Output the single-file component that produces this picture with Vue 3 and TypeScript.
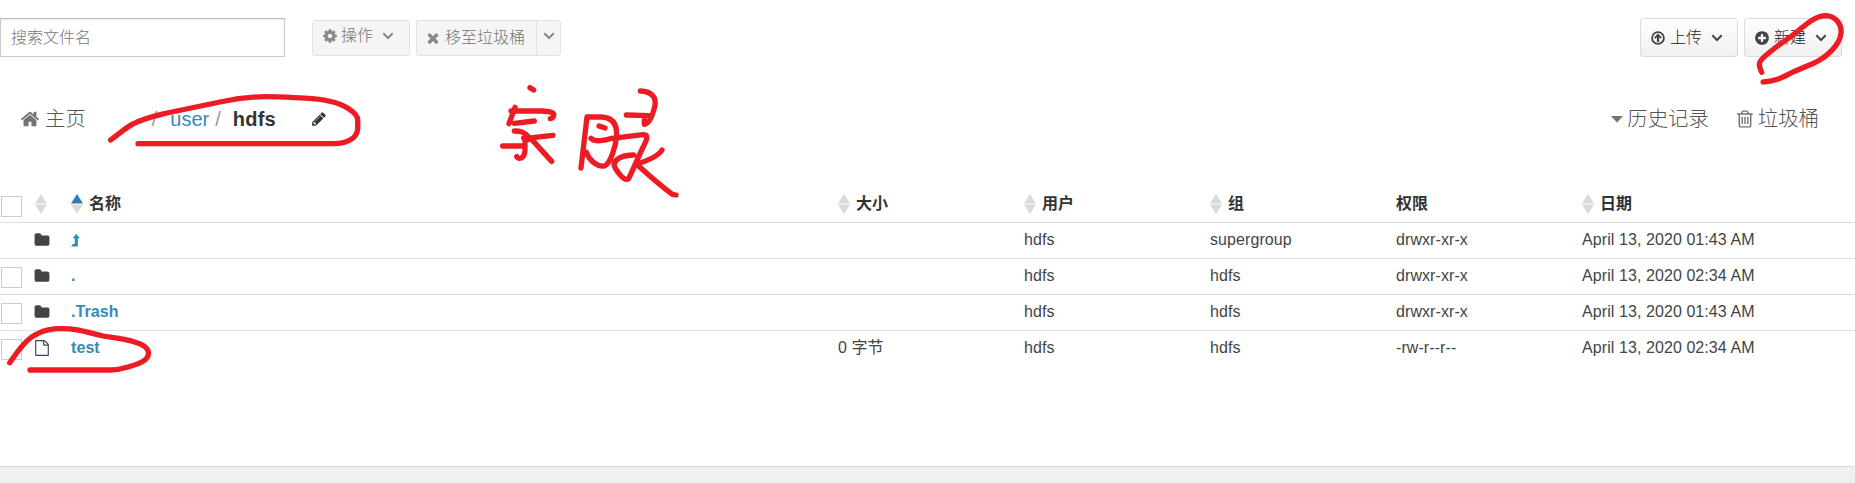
<script setup lang="ts">
interface FileRow {
  kind: 'up' | 'folder' | 'file'
  name: string
  size: string
  user: string
  group: string
  mode: string
  date: string
}

const columns = [
  { label: '名称', sortable: true, active: true },
  { label: '大小', sortable: true, active: false },
  { label: '用户', sortable: true, active: false },
  { label: '组', sortable: true, active: false },
  { label: '权限', sortable: false, active: false },
  { label: '日期', sortable: true, active: false },
]

const rows: FileRow[] = [
  { kind: 'up', name: '', size: '', user: 'hdfs', group: 'supergroup', mode: 'drwxr-xr-x', date: 'April 13, 2020 01:43 AM' },
  { kind: 'folder', name: '.', size: '', user: 'hdfs', group: 'hdfs', mode: 'drwxr-xr-x', date: 'April 13, 2020 02:34 AM' },
  { kind: 'folder', name: '.Trash', size: '', user: 'hdfs', group: 'hdfs', mode: 'drwxr-xr-x', date: 'April 13, 2020 01:43 AM' },
  { kind: 'file', name: 'test', size: '0 字节', user: 'hdfs', group: 'hdfs', mode: '-rw-r--r--', date: 'April 13, 2020 02:34 AM' },
]

const icons = {
  home: 'M1472 992v480q0 26-19 45t-45 19h-384v-384h-256v384h-384q-26 0-45-19t-19-45v-480q0-1 .5-3t.5-3l575-474 575 474q1 2 1 6zm223-69l-62 74q-8 9-21 11h-3q-13 0-21-7l-692-577-692 577q-12 8-24 7-13-2-21-11l-62-74q-8-10-7-23.5t11-21.5l719-599q32-26 76-26t76 26l244 204v-195q0-14 9-23t23-9h192q14 0 23 9t9 23v408l219 182q10 8 11 21.5t-7 23.5z',
  folder: 'M1728 608v704q0 92-66 158t-158 66h-1216q-92 0-158-66t-66-158v-960q0-92 66-158t158-66h320q92 0 158 66t66 158v32h672q92 0 158 66t66 158z',
  file: 'M1596 380q28 28 48 76t20 88v1152q0 40-28 68t-68 28h-1344q-40 0-68-28t-28-68v-1600q0-40 28-68t68-28h896q40 0 88 20t76 48zm-444-244v376h376q-10-29-22-41l-313-313q-12-12-41-22zm384 1528v-1024h-416q-40 0-68-28t-28-68v-416h-768v1536h1280z',
  cog: 'M1152 896q0-106-75-181t-181-75-181 75-75 181 75 181 181 75 181-75 75-181zm512-109v222q0 12-8 23t-20 13l-185 28q-19 54-39 91 35 50 107 138 10 12 10 25t-9 23q-27 37-99 108t-94 71q-12 0-26-9l-138-108q-44 23-91 38-16 136-29 186-7 28-36 28h-222q-14 0-24.5-8.5t-11.5-21.5l-28-184q-49-16-90-37l-141 107q-10 9-25 9-14 0-25-11-126-114-165-168-7-10-7-23 0-12 8-23 15-21 51-66.5t54-70.5q-27-50-41-99l-183-27q-13-2-21-12.5t-8-23.5v-222q0-12 8-23t19-13l186-28q14-46 39-92-40-57-107-138-10-12-10-24 0-10 9-23 26-36 98.5-107.5t94.5-71.5q13 0 26 10l138 107q44-23 91-38 16-136 29-186 7-28 36-28h222q14 0 24.5 8.5t11.5 21.5l28 184q49 16 90 37l142-107q9-9 24-9 13 0 25 10 129 119 165 170 7 8 7 22 0 12-8 23-15 21-51 66.5t-54 70.5q26 50 41 98l183 28q13 2 21 12.5t8 23.5z',
  times: 'M1490 1322q0 40-28 68l-136 136q-28 28-68 28t-68-28l-294-294-294 294q-28 28-68 28t-68-28l-136-136q-28-28-28-68t28-68l294-294-294-294q-28-28-28-68t28-68l136-136q28-28 68-28t68 28l294 294 294-294q28-28 68-28t68 28l136 136q28 28 28 68t-28 68l-294 294 294 294q28 28 28 68z',
  pencil: 'M491 1536l91-91-235-235-91 91v107h128v128h107zm523-928q0-22-22-22-10 0-17 7l-542 542q-7 7-7 17 0 22 22 22 10 0 17-7l542-542q7-7 7-17zm-54-192l416 416-832 832h-416v-416zm683 96q0 53-37 90l-166 166-416-416 166-165q36-38 90-38 53 0 91 38l235 234q37 39 37 91z',
  plus: 'M1344 960v-128q0-26-19-45t-45-19h-256v-256q0-26-19-45t-45-19h-128q-26 0-45 19t-19 45v256h-256q-26 0-45 19t-19 45v128q0 26 19 45t45 19h256v256q0 26 19 45t45 19h128q26 0 45-19t19-45v-256h256q26 0 45-19t19-45zm320-64q0 209-103 385.5t-279.5 279.5-385.5 103-385.5-103-279.5-279.5-103-385.5 103-385.5 279.5-279.5 385.5-103 385.5 103 279.5 279.5 103 385.5z',
  trash: 'M704 736v576q0 14-9 23t-23 9h-64q-14 0-23-9t-9-23v-576q0-14 9-23t23-9h64q14 0 23 9t9 23zm256 0v576q0 14-9 23t-23 9h-64q-14 0-23-9t-9-23v-576q0-14 9-23t23-9h64q14 0 23 9t9 23zm256 0v576q0 14-9 23t-23 9h-64q-14 0-23-9t-9-23v-576q0-14 9-23t23-9h64q14 0 23 9t9 23zm128 724v-948h-896v948q0 22 7 40.5t14.5 27 10.5 8.5h832q3 0 10.5-8.5t14.5-27 7-40.5zm-672-1076h448l-48-117q-7-9-17-11h-317q-10 2-17 11zm928 32v64q0 14-9 23t-23 9h-96v948q0 83-47 143.5t-113 60.5h-832q-66 0-113-58.5t-47-141.5v-952h-96q-14 0-23-9t-9-23v-64q0-14 9-23t23-9h309l70-167q15-37 54-63t79-26h320q40 0 79 26t54 63l70 167h309q14 0 23 9t9 23z',
}
</script>

<template>
  <div class="page">
    <main class="panel">
      <div class="toolbar">
        <input class="search" type="text" placeholder="搜索文件名" />
        <button class="btn disabled actions">
          <svg class="icon" viewBox="0 0 1792 1792"><path :d="icons.cog" /></svg>
          <span>操作</span>
          <svg class="chevron" viewBox="0 0 12 8"><path d="M1.3 1.3 6 6 10.7 1.3" /></svg>
        </button>
        <div class="group">
          <button class="btn disabled move">
            <svg class="icon" viewBox="0 0 1792 1792"><path :d="icons.times" /></svg>
            <span>移至垃圾桶</span>
          </button>
          <button class="btn disabled more">
            <svg class="chevron" viewBox="0 0 12 8"><path d="M1.3 1.3 6 6 10.7 1.3" /></svg>
          </button>
        </div>
        <button class="btn primary upload">
          <svg class="icon" viewBox="0 0 16 16">
            <circle cx="8" cy="8" r="5.9" fill="none" stroke="currentColor" stroke-width="1.8" />
            <path d="M8 3.6 11.9 7.5 10.7 8.7 9.1 7.2V12H6.9V7.2L5.3 8.7 4.1 7.5Z" />
          </svg>
          <span>上传</span>
          <svg class="chevron" viewBox="0 0 12 8"><path d="M1.3 1.3 6 6 10.7 1.3" /></svg>
        </button>
        <button class="btn primary">
          <svg class="icon" viewBox="0 0 1792 1792"><path :d="icons.plus" /></svg>
          <span>新建</span>
          <svg class="chevron" viewBox="0 0 12 8"><path d="M1.3 1.3 6 6 10.7 1.3" /></svg>
        </button>
      </div>

      <nav class="crumbs">
        <a class="home">
          <svg class="icon large" viewBox="0 0 1792 1792"><path :d="icons.home" /></svg>
          <span>主页</span>
        </a>
        <span class="slash">/</span>
        <a class="link">user</a>
        <span class="slash second">/</span>
        <strong class="current">hdfs</strong>
        <svg class="icon edit" viewBox="0 0 1792 1792"><path :d="icons.pencil" /></svg>
        <a class="history">
          <svg class="caret" viewBox="0 0 12 7"><path d="M0 0H12L6 6.6Z" /></svg>
          <span>历史记录</span>
        </a>
        <a class="bin">
          <svg class="icon large" viewBox="0 0 1792 1792"><path :d="icons.trash" /></svg>
          <span>垃圾桶</span>
        </a>
      </nav>

      <div class="table">
        <div class="row head">
          <span class="cell"><i class="box"></i></span>
          <span class="cell">
            <svg class="sort" viewBox="0 0 12 20"><path d="M6 0 12 9.5H0Z" /><path d="M0 10.500H12L6 20Z" /></svg>
          </span>
          <span v-for="c in columns" :key="c.label" class="cell">
            <svg v-if="c.sortable" class="sort" viewBox="0 0 12 20">
              <path d="M6 0 12 9.5H0Z" :class="{ on: c.active }" />
              <path d="M0 10.500H12L6 20Z" />
            </svg>
            <b>{{ c.label }}</b>
          </span>
        </div>
        <div v-for="(r, i) in rows" :key="i" class="row">
          <span class="cell"><i v-if="r.kind !== 'up'" class="box"></i></span>
          <span class="cell type">
            <svg class="icon" viewBox="0 0 1792 1792"><path :d="r.kind === 'file' ? icons.file : icons.folder" /></svg>
          </span>
          <span class="cell name">
            <svg v-if="r.kind === 'up'" class="level" viewBox="0 0 9 13">
              <path d="M5.2 0 9 4.200H6.900V12.600H0L1.800 9.900H3.700V4.200H1.500Z" />
            </svg>
            <template v-else>{{ r.name }}</template>
          </span>
          <span class="cell">{{ r.size }}</span>
          <span class="cell">{{ r.user }}</span>
          <span class="cell">{{ r.group }}</span>
          <span class="cell">{{ r.mode }}</span>
          <span class="cell">{{ r.date }}</span>
        </div>
      </div>
    </main>

    <!-- Freehand pen marks over the page -->
    <svg class="ink" viewBox="0 0 1855 483">
      <path d="M110.5 140C118 135 126 127 134 123.500C145 118 155 116 167 113L220 102C240 97.500 250 96.800 265 96.700C280 96.700 290 97.500 305 98.200C325 99 340 103 349 109C355 113 357.700 116 357.700 120V129C357 136 351 143.700 333 143.700H138" />
      <path d="M1761.700 72.300C1758.500 65 1758.500 63 1762 59C1770 51 1783 42 1793 35C1803 28 1812 16 1826 15.700C1835 16 1842 24 1841 33C1840 45 1826 58 1813 63.500L1793 72C1783 77 1776 81.500 1763 82" />
      <path d="M9.700 362.700L17 352.500C23 345 29 337 38 333.500C45 330 50 328.700 60 328.700C80 328.500 85 332 103 336C117 338.500 148.500 341 148.500 353C148.500 361 138 364 128 367C120 369.500 115 370 110 370H30" />
      <g transform="translate(495 80) scale(.33333)">
        <path d="M105 23 116 30" />
        <path d="M60 82 42 131M48 93H140C165 94 178 97 176 106C175 112 171 115 166 116M58 130 118 123M58 153C75 153 90 155 104 174C98 182 92 182 86 174M23 198H90M90 178V212C88 236 71 240 65 230M92 175 174 166M108 176 170 244" />
      </g>
      <g transform="translate(575 85) scale(.33333)">
        <path d="M18 249 36 96H78C110 97 126 115 125 150C123 185 105 238 88 243C65 246 42 225 34 202M72 123 90 129M48 160C60 172 90 167 110 160L205 149C224 149 214 166 205 185C190 215 172 260 160 282C146 290 118 250 117 238C119 224 140 210 176 210M261 195C250 214 215 228 182 238M185 238C220 270 270 312 292 328L303 330M196 18C228 19 244 36 240 60C235 84 225 115 208 118V104M154 90 222 92" />
      </g>
    </svg>
  </div>
</template>

<style>
body {
  margin: 0;
  background: #f0f0f0;
}
</style>

<style scoped>
.page {
  position: relative;
  height: 483px;
  overflow: hidden;
  background: #f0f0f0;
  color: #444;
  font: 16px/20px "Liberation Sans", "Noto Sans CJK SC", sans-serif;
}
.panel {
  box-sizing: border-box;
  height: 467px;
  padding-top: 18px;
  border-bottom: 1px solid #d8d8d8;
  border-bottom-right-radius: 3px;
  background: #fff;
}
.toolbar {
  display: flex;
  align-items: center;
  height: 39px;
  padding-right: 13px;
}
.search {
  box-sizing: border-box;
  width: 285px;
  height: 39px;
  margin: 0 27px 0 0;
  padding: 0 10px;
  border: 1px solid #ccc;
  border-top-color: #bbb;
  border-radius: 0;
  box-shadow: inset 0 1px 2px rgba(0, 0, 0, 0.08);
  font: inherit;
  font-weight: 300;
}
.search::placeholder {
  color: #777;
  opacity: 1;
}
.btn {
  box-sizing: border-box;
  display: flex;
  align-items: center;
  height: 39px;
  margin: 0;
  padding: 0 0 0 9px;
  border: 1px solid #dcdcdc;
  border-radius: 3px;
  background: linear-gradient(#fff, #f0f0f0);
  color: #444;
  font: inherit;
}
.btn span {
  margin-left: 4px;
  color: #222;
  font-weight: 300;
}
.btn .chevron {
  margin-left: 9px;
}
.primary {
  width: 98px;
}
.upload {
  margin: 0 6px 0 auto;
}
.disabled {
  height: 36px;
  border-color: #e2e2e2;
  background: #f5f5f5;
  color: #888;
}
.disabled span {
  margin-left: 3px;
  color: #747474;
}
.actions {
  width: 98px;
  margin-right: 6px;
  padding-bottom: 3px;
}
.group {
  display: flex;
}
.move {
  width: 120px;
  padding-left: 8px;
  border-right: 0;
  border-radius: 3px 0 0 3px;
}
.move span {
  margin-left: 4px;
}
.more {
  width: 25px;
  padding: 0 0 3px;
  justify-content: center;
  border-radius: 0 3px 3px 0;
}
.more .chevron {
  margin: 0;
}
.icon {
  flex: none;
  width: 16px;
  height: 16px;
  fill: currentColor;
}
.icon.large {
  width: 20px;
  height: 20px;
}
.chevron {
  flex: none;
  width: 12px;
  height: 8px;
  fill: none;
  stroke: currentColor;
  stroke-width: 2;
}
.crumbs {
  display: flex;
  align-items: center;
  height: 30px;
  margin-top: 47px;
  padding: 0 36px 0 20px;
  color: #737373;
  font-size: 20px;
}
.home,
.history,
.bin {
  display: flex;
  align-items: center;
  font-weight: 300;
}
.home span,
.history span,
.bin span {
  color: #555;
  font-size: 20.4px;
}
.home span {
  margin-left: 5px;
}
.slash {
  margin-left: 66px;
  color: #999;
}
.link {
  margin-left: 13px;
  color: #338bb8;
}
.second {
  margin-left: 6px;
}
.current {
  margin-left: 12px;
  color: #333;
  letter-spacing: 0.2px;
}
.edit {
  margin-left: 35px;
  color: #333;
}
.history {
  margin-left: auto;
}
.history span {
  margin-left: 4px;
}
.bin {
  margin-left: 26px;
}
.bin span {
  margin-left: 3px;
}
.caret {
  width: 12px;
  height: 7px;
  fill: currentColor;
}
.table {
  margin-top: 52px;
}
.row {
  box-sizing: border-box;
  display: grid;
  grid-template-columns: 35px 36px 767px 186px 186px 186px 186px 1fr;
  height: 36px;
  padding-bottom: 1px;
  border-bottom: 1px solid #e0e0e0;
  letter-spacing: 0.08px;
}
.row:last-child {
  padding-bottom: 2px;
  border-bottom: 0;
}
.head {
  height: 37px;
  padding-bottom: 0;
}
.cell {
  display: flex;
  align-items: center;
  white-space: nowrap;
}
.cell b {
  margin-left: 6px;
  color: #333;
}
.cell b:first-child {
  margin-left: 0;
}
.box {
  box-sizing: border-box;
  width: 21px;
  height: 21px;
  margin: 3px 0 0 1px;
  border: 1px solid #ccc;
  background: #fff;
}
.head .box {
  margin-top: 5px;
}
.type .icon {
  margin-left: -1px;
}
.sort {
  width: 12px;
  height: 20px;
  fill: #dadada;
}
.sort .on {
  fill: #2c7fb0;
}
.name {
  color: #338bb8;
  font-weight: bold;
}
.level {
  width: 9px;
  height: 13px;
  fill: currentColor;
}
.ink {
  position: absolute;
  inset: 0;
  width: 1855px;
  height: 483px;
  pointer-events: none;
  fill: none;
  stroke: #ed1c24;
  stroke-width: 5.300;
  stroke-linecap: round;
  stroke-linejoin: round;
}
.ink g {
  stroke-width: 16;
}
</style>
